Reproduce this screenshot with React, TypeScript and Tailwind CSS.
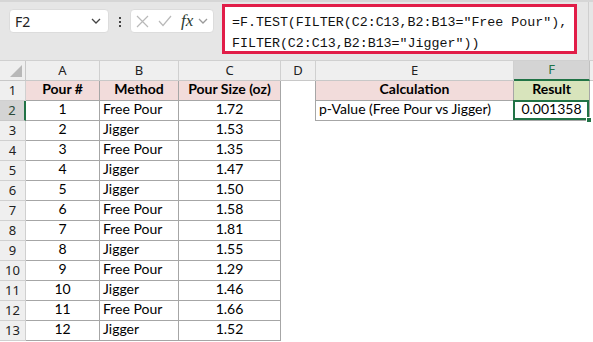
import React from "react";

const rows: [number, string, string][] = [
  [1, "Free Pour", "1.72"],
  [2, "Jigger", "1.53"],
  [3, "Free Pour", "1.35"],
  [4, "Jigger", "1.47"],
  [5, "Jigger", "1.50"],
  [6, "Free Pour", "1.58"],
  [7, "Free Pour", "1.81"],
  [8, "Jigger", "1.55"],
  [9, "Free Pour", "1.29"],
  [10, "Jigger", "1.46"],
  [11, "Free Pour", "1.66"],
  [12, "Jigger", "1.52"],
];

const cellFont = "font-['Lato',sans-serif] text-[14px] text-black";
const tb = "border-r border-b border-[#a6a6a6]";

function Chevron({ className }: { className?: string }) {
  return (
    <svg width="10" height="6" viewBox="0 0 10 6" className={className}>
      <path d="M1 1 L5 5 L9 1" fill="none" stroke="currentColor" strokeWidth="1.3" />
    </svg>
  );
}

export default function App() {
  return (
    <div className="w-[593px] h-[342px] overflow-hidden bg-white">
      {/* formula bar area */}
      <div className="h-[60px] bg-[#e6e6e6] border-t-2 border-[#d6d6d6] flex items-start relative">
        <div className="mt-[7px] ml-[9px] w-[100px] h-[24px] bg-white rounded-[4px] border border-[#dcdcdc] flex items-center justify-between pl-[5px] pr-[7px]">
          <span className="font-['Noto_Sans',sans-serif] text-[14px] text-[#222]">F2</span>
          <Chevron className="text-[#444]" />
        </div>
        <div className="mt-[15px] ml-[10px] flex flex-col gap-[2px]">
          <div className="w-[2px] h-[2px] bg-[#444]" />
          <div className="w-[2px] h-[2px] bg-[#444]" />
          <div className="w-[2px] h-[2px] bg-[#444]" />
        </div>
        <div className="mt-[7px] ml-[9px] w-[84px] h-[24px] bg-white rounded-[4px] border border-[#dcdcdc] flex items-center pl-[5px] gap-[9px]">
          <svg width="13" height="13" viewBox="0 0 13 13">
            <path d="M1 1 L12 12 M12 1 L1 12" stroke="#b9b9b9" strokeWidth="1.2" />
          </svg>
          <svg width="14" height="12" viewBox="0 0 14 12">
            <path d="M1 6 L5 10.5 L13 1" fill="none" stroke="#b9b9b9" strokeWidth="1.2" />
          </svg>
          <span className="font-['Liberation_Serif',serif] italic text-[17px] text-[#2b3a2f] leading-none -mt-[2px]">fx</span>
          <Chevron className="text-[#9a9a9a] -ml-[4px]" />
        </div>
        <div className="ml-[8px] mt-[2px] w-[355px] h-[50px] bg-white border-[3px] border-[#e11d48] pl-[7px] pt-[5px]">
          <div className="font-['Liberation_Mono',monospace] text-[13.3px] leading-[21px] text-[#111] whitespace-pre">
            {'=F.TEST(FILTER(C2:C13,B2:B13="Free Pour"),\nFILTER(C2:C13,B2:B13="Jigger"))'}
          </div>
        </div>
        <div className="absolute right-[4px] top-0 bottom-0 w-px bg-[#cfcfcf]" />
      </div>

      {/* grid */}
      <div className="grid grid-cols-[26px_74px_79px_102px_35px_198px_76px_1fr] auto-rows-[20px] border-t border-[#d0d0d0]">
        {/* column headers */}
        <div className="bg-[#efefef] border-r border-b border-[#c8c8c8] relative">
          <svg width="12" height="12" viewBox="0 0 12 12" className="absolute right-[3px] bottom-[3px]">
            <path d="M12 0 L12 12 L0 12 Z" fill="#b8b8b8" />
          </svg>
        </div>
        {["A", "B", "C", "D", "E"].map((l) => (
          <div
            key={l}
            className="bg-[#efefef] border-r border-b border-[#d0d0d0] border-b-[#c8c8c8] flex items-center justify-center font-['Noto_Sans',sans-serif] text-[13px] text-[#222]"
          >
            {l}
          </div>
        ))}
        <div className="bg-[#d4d4d4] border-r border-[#c0c0c0] border-b-2 border-b-[#217346] flex items-center justify-center font-['Noto_Sans',sans-serif] text-[13px] text-[#217346]">
          F
        </div>
        <div className="bg-[#efefef] border-b border-[#c8c8c8]" />

        {/* row 1 */}
        <div className="bg-[#efefef] border-r border-b border-[#d0d0d0] flex items-center justify-center font-['Noto_Sans',sans-serif] text-[13px] text-[#222]">
          1
        </div>
        <div className={`bg-[#f2dcdb] ${tb} ${cellFont} font-bold flex items-end justify-center pb-[1px]`}>Pour #</div>
        <div className={`bg-[#f2dcdb] ${tb} ${cellFont} font-bold flex items-end justify-center pb-[1px]`}>Method</div>
        <div className={`bg-[#f2dcdb] ${tb} ${cellFont} font-bold flex items-end justify-center pb-[1px]`}>Pour Size (oz)</div>
        <div className="border-r border-[#a6a6a6]" />
        <div className={`bg-[#f2dcdb] ${tb} ${cellFont} font-bold flex items-end justify-center pb-[1px]`}>Calculation</div>
        <div className={`bg-[#d8e4bc] ${tb} ${cellFont} font-bold flex items-end justify-center pb-[1px]`}>Result</div>
        <div />

        {rows.map(([n, m, v], i) => {
          const r = i + 2;
          const sel = r === 2;
          return (
            <React.Fragment key={r}>
              <div
                className={
                  sel
                    ? "bg-[#d4d4d4] border-r-2 border-r-[#217346] border-b border-b-[#c8c8c8] flex items-center justify-center font-['Noto_Sans',sans-serif] text-[13px] text-[#2b4a38]"
                    : "bg-[#efefef] border-r border-b border-[#d0d0d0] flex items-center justify-center font-['Noto_Sans',sans-serif] text-[13px] text-[#222]"
                }
              >
                {r}
              </div>
              <div className={`${tb} ${cellFont} flex items-end justify-center pb-[1px]`}>{n}</div>
              <div className={`${tb} ${cellFont} flex items-end justify-start pl-[3px] pb-[1px]`}>{m}</div>
              <div className={`${tb} ${cellFont} flex items-end justify-center pb-[1px]`}>{v}</div>
              {sel ? (
                <>
                  <div className="border-r border-[#a6a6a6]" />
                  <div className={`${tb} ${cellFont} flex items-end justify-start pl-[3px] pb-[1px]`}>
                    p-Value (Free Pour vs Jigger)
                  </div>
                  <div className={`${tb} ${cellFont} flex items-end justify-center pb-[1px] relative`}>
                    0.001358
                    <div className="absolute -left-px -top-px right-0 bottom-0 border-2 border-[#217346]" />
                    <div className="absolute -right-[3px] -bottom-[3px] w-[6px] h-[6px] bg-[#217346] border border-white" />
                  </div>
                  <div />
                </>
              ) : (
                <>
                  <div />
                  <div />
                  <div />
                  <div />
                </>
              )}
            </React.Fragment>
          );
        })}
      </div>
    </div>
  );
}
